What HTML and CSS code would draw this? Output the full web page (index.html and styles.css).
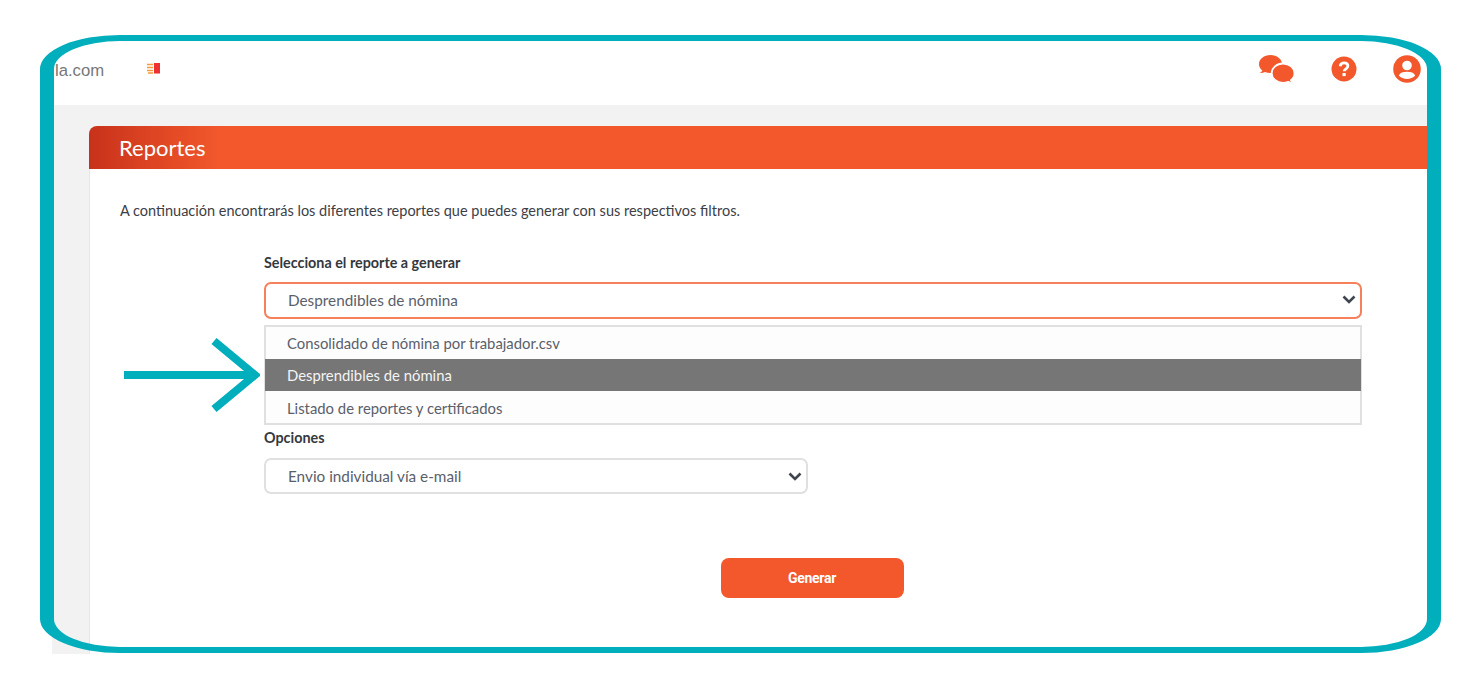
FILE: index.html
```html
<!DOCTYPE html>
<html lang="es">
<head>
<meta charset="utf-8">
<title>Reportes</title>
<link rel="stylesheet" href="styles.css">
</head>
<body>
<div class="stage">
  <div class="app">
    <header class="topbar">
      <div class="brand">
        <span class="domain">la.com</span>
        <svg class="menu-mark" width="13" height="11" viewBox="0 0 13 11"><path d="M0 1.500h6M0 4.500h6M0 7.500h6M1 10h5" stroke="#f59a3c" stroke-width="1.300"/><rect x="7" y="0" width="6" height="10.500" fill="#ee3030"/></svg>
      </div>
      <div class="tools">
        <svg width="36" height="28" viewBox="0 0 36 28"><path d="M11.500 0C5.100 0 0 4 0 9c0 2.700 1.300 4.900 3.400 6.500C3 16.500 2 17.300.5 18c1.900.2 3.900-.2 5.500-1 1.600.7 3.500 1 5.500 1C17.900 18 23 14 23 9s-5.100-9-11.500-9z" fill="#f2582c"/><path d="M24 8.500c-6.300 0-11.300 4.400-11.300 9.700s5 9.700 11.300 9.700c1.800 0 3.500-.3 5-1 1.800.8 3.800 1.200 6 1-1.500-.8-2.600-1.700-3.100-2.700 2.200-1.700 3.600-4.200 3.600-7 0-5.300-5.200-9.700-11.500-9.700z" fill="#f2582c" stroke="#fff" stroke-width="1.800"/></svg>
        <svg class="help" width="26" height="26" viewBox="0 0 26 26"><circle cx="13" cy="13" r="12.500" fill="#f2582c"/><path d="M9.200 10.200c.3-2.200 1.800-3.300 3.900-3.300 2.200 0 3.800 1.300 3.800 3.100 0 2.700-3.700 2.800-3.700 5.200" fill="none" stroke="#fff" stroke-width="2.800"/><rect x="11.500" y="17" width="3.200" height="3.100" fill="#fff"/></svg>
        <svg class="user" width="28" height="28" viewBox="0 0 28 28"><circle cx="14" cy="14" r="13.800" fill="#f2582c"/><circle cx="14" cy="10.500" r="4.800" fill="#fff"/><path d="M5.800 20.500c1.200-2.800 4-3.700 8.200-3.700s7 .9 8.200 3.700c-1.900 2.300-4.900 3.400-8.200 3.400s-6.300-1.100-8.200-3.400z" fill="#fff"/></svg>
      </div>
    </header>
    <main class="content">
      <section class="card">
        <h1 class="card-title">Reportes</h1>
        <div class="card-body">
          <p class="intro">A continuación encontrarás los diferentes reportes que puedes generar con sus respectivos filtros.</p>
          <div class="form">
            <label class="field-label">Selecciona el reporte a generar</label>
            <div class="select select-active">
              <span class="select-text">Desprendibles de nómina</span>
              <svg class="chevron" width="14" height="9" viewBox="0 0 14 9"><path d="M1.500 1.500L7 7l5.500-5.500" fill="none" stroke="#3f4650" stroke-width="2.600"/></svg>
            </div>
            <ul class="options">
              <li class="option">Consolidado de nómina por trabajador.csv</li>
              <li class="option option-selected">Desprendibles de nómina</li>
              <li class="option">Listado de reportes y certificados</li>
            </ul>
            <label class="field-label field-label-second">Opciones</label>
            <div class="select select-short">
              <span class="select-text">Envio individual vía e-mail</span>
              <svg class="chevron" width="14" height="9" viewBox="0 0 14 9"><path d="M1.500 1.500L7 7l5.500-5.500" fill="none" stroke="#3f4650" stroke-width="2.600"/></svg>
            </div>
            <div class="actions"><button class="generate" type="button">Generar</button></div>
          </div>
        </div>
      </section>
    </main>
  </div>
  <div class="frame"></div>
  <svg class="pointer" width="136" height="76" viewBox="0 0 136 76"><path d="M0 38h131M90 4l41 34-41 34" fill="none" stroke="#00aebc" stroke-width="8"/></svg>
</div>
</body>
</html>
```
FILE: styles.css
```css
* { box-sizing: border-box; }
html, body { margin: 0; padding: 0; background: #fff; }
body { font-family: Lato, "Liberation Sans", sans-serif; color: #4a4f57; overflow: hidden; }
.stage { position: relative; width: 1465px; height: 682px; padding: 41px 0 0 52px; }
.app { width: 1375px; height: 613px; display: flex; flex-direction: column; overflow: hidden; }
.topbar { height: 64px; flex: none; display: flex; align-items: flex-start; justify-content: space-between; background: #fff; }
.brand { display: flex; align-items: flex-start; padding: 20px 0 0 3px; }
.domain { font-family: "Liberation Sans", Arial, sans-serif; font-size: 16.700px; line-height: 20px; color: #777; }
.menu-mark { margin: 2px 0 0 43px; }
.tools { display: flex; align-items: flex-start; padding: 14px 0 0 0; margin-right: 6px; }
.help { margin: 1px 0 0 36px; }
.user { margin: 0 0 0 36px; }
.content { flex: 1; background: #f2f2f2; padding: 21px 0 0 37px; min-height: 0; }
.card { height: 100%; background: #fff; border-left: 1px solid #e6e6e6; border-radius: 8px 0 0 0; }
.card-title { margin: 0 0 0 -1px; height: 43px; padding-left: 30px; font-size: 22px; font-weight: 400; line-height: 43px; color: #fff; border-radius: 8px 0 0 0; background: linear-gradient(90deg, #c8321a 0, #f2582c 130px); }
.card-body { padding: 32px 0 0 30px; }
.intro { margin: 0; font-size: 14.500px; line-height: 20px; color: #3c4046; }
.form { width: 1098px; margin-left: 144px; padding-top: 32px; }
.field-label { display: block; font-size: 14.350px; font-weight: 700; line-height: 20px; color: #35383d; }
.select { display: flex; align-items: center; justify-content: space-between; height: 36px; margin-top: 9px; padding: 0 4px 0 22px; border: 2px solid #e0e0e0; border-radius: 7px; background: #fff; font-size: 15.300px; color: #5a606a; }
.select-text { line-height: 20px; }
.select-active { height: 37px; padding-bottom: 2px; border-color: #f67f5c; }
.select-short { width: 544px; margin-top: 10px; padding-right: 4px; }
.options { margin: 6px 0 0; padding: 0; list-style: none; height: 100px; border: 2px solid #e0e0e0; background: #fdfdfd; }
.option { height: 33px; padding-left: 21px; font-size: 14.850px; line-height: 35px; color: #5a606a; }
.option:first-child { height: 32px; line-height: 33px; }
.option-selected { height: 32px; margin: 0 -1px; padding-left: 22px; line-height: 33px; background: #767676; color: #f4f4f4; }
.field-label-second { margin-top: 3px; }
.actions { display: flex; justify-content: center; margin-top: 64px; padding-right: 2px; }
.generate { width: 183px; height: 40px; border: 0; border-radius: 8px; background: #f2582c; color: #fff; font-family: Roboto, "Liberation Sans", sans-serif; font-size: 14px; font-weight: 700; letter-spacing: -0.300px; }
.frame { position: absolute; left: 40px; top: 35px; width: 1401px; height: 618px; border-style: solid; border-color: #00aebc; border-width: 6px 14px; border-radius: 80px / 34px; pointer-events: none; }
.pointer { position: absolute; left: 124px; top: 337px; }
```
